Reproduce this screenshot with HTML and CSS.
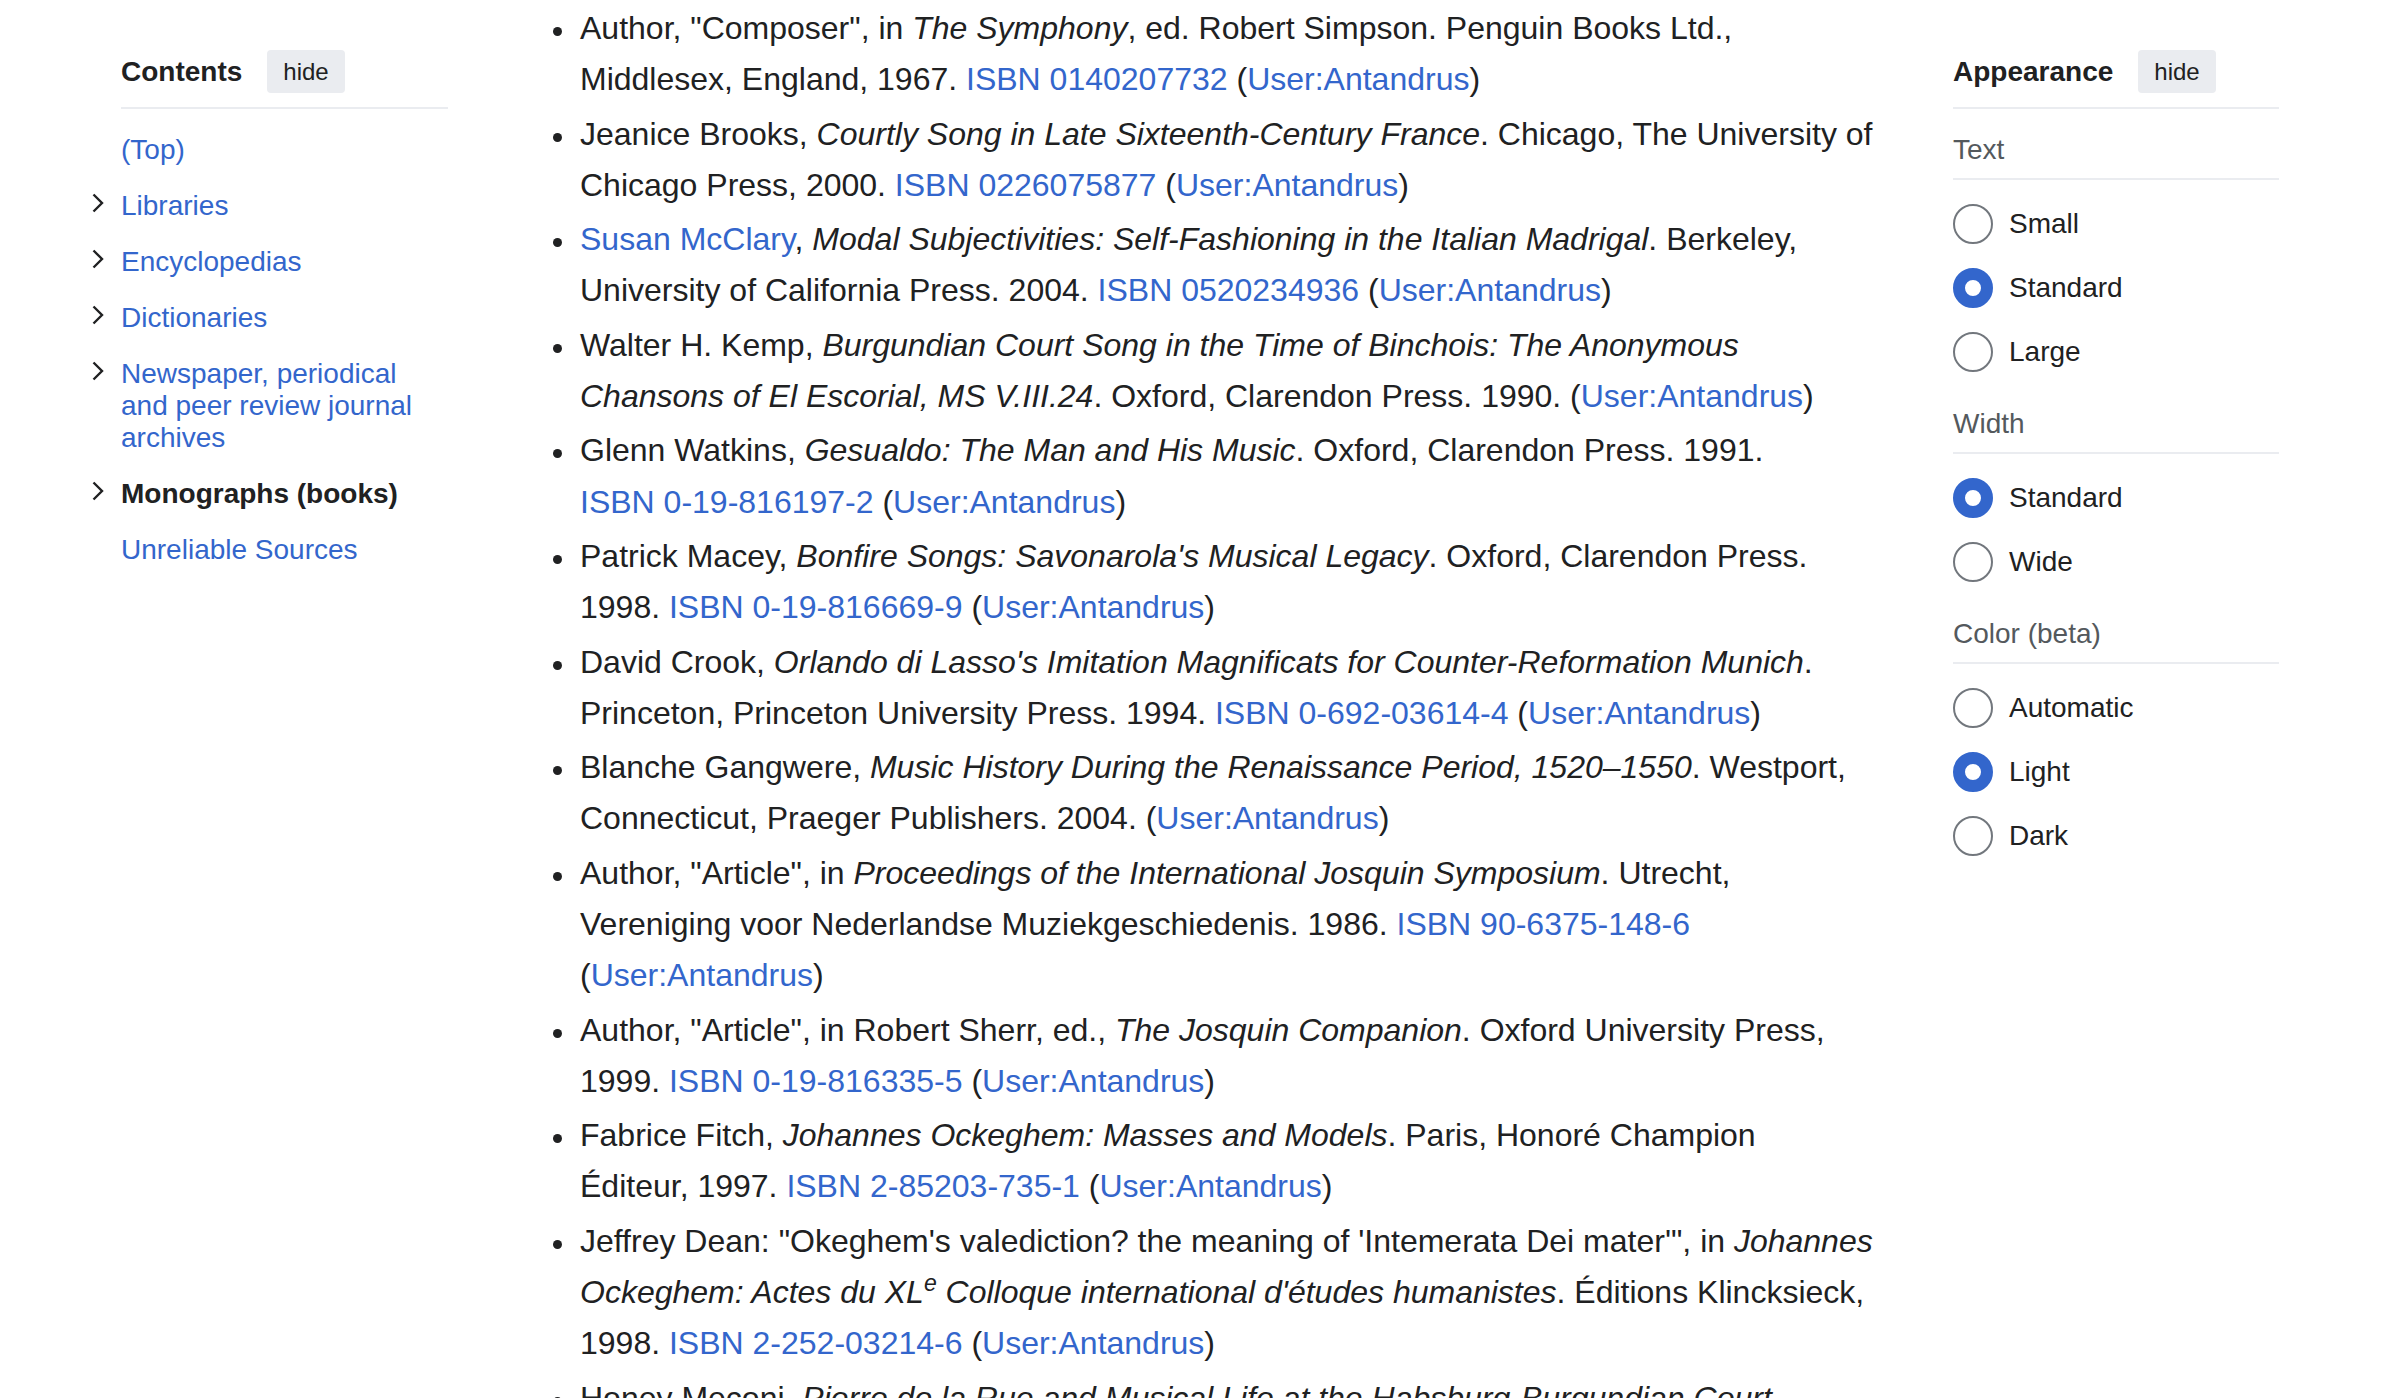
FILE: index.html
```html
<!DOCTYPE html>
<html lang="en">
<head>
<meta charset="utf-8">
<title>Monographs (books)</title>
<link rel="stylesheet" href="styles.css">
</head>
<body>
<div class="page">
  <nav class="toc">
    <div class="panel-head">
      <span class="panel-title">Contents</span>
      <button class="hide-btn" type="button">hide</button>
    </div>
    <ul class="toc-list">
      <li class="toc-item"><a class="toc-text" href="#">(Top)</a></li>
      <li class="toc-item"><span class="toc-toggle"><svg width="12" height="20" viewBox="0 0 12 20"><polyline points="1.5,1.5 10,10 1.5,18.5" fill="none" stroke="#202122" stroke-width="2.4"/></svg></span><a class="toc-text" href="#">Libraries</a></li>
      <li class="toc-item"><span class="toc-toggle"><svg width="12" height="20" viewBox="0 0 12 20"><polyline points="1.5,1.5 10,10 1.5,18.5" fill="none" stroke="#202122" stroke-width="2.4"/></svg></span><a class="toc-text" href="#">Encyclopedias</a></li>
      <li class="toc-item"><span class="toc-toggle"><svg width="12" height="20" viewBox="0 0 12 20"><polyline points="1.5,1.5 10,10 1.5,18.5" fill="none" stroke="#202122" stroke-width="2.4"/></svg></span><a class="toc-text" href="#">Dictionaries</a></li>
      <li class="toc-item"><span class="toc-toggle"><svg width="12" height="20" viewBox="0 0 12 20"><polyline points="1.5,1.5 10,10 1.5,18.5" fill="none" stroke="#202122" stroke-width="2.4"/></svg></span><a class="toc-text" href="#">Newspaper, periodical and peer review journal archives</a></li>
      <li class="toc-item"><span class="toc-toggle"><svg width="12" height="20" viewBox="0 0 12 20"><polyline points="1.5,1.5 10,10 1.5,18.5" fill="none" stroke="#202122" stroke-width="2.4"/></svg></span><a class="toc-text active" href="#">Monographs (books)</a></li>
      <li class="toc-item"><a class="toc-text" href="#">Unreliable Sources</a></li>
    </ul>
  </nav>

  <main class="content">
    <ul class="refs">
      <li>Author, "Composer", in <i>The Symphony</i>, ed. Robert Simpson. Penguin Books Ltd.,<br>Middlesex, England, 1967. <a href="#">ISBN&nbsp;0140207732</a> (<a href="#">User:Antandrus</a>)</li>
      <li>Jeanice Brooks, <i>Courtly Song in Late Sixteenth-Century France</i>. Chicago, The University of<br>Chicago Press, 2000. <a href="#">ISBN&nbsp;0226075877</a> (<a href="#">User:Antandrus</a>)</li>
      <li><a href="#">Susan McClary</a>, <i>Modal Subjectivities: Self-Fashioning in the Italian Madrigal</i>. Berkeley,<br>University of California Press. 2004. <a href="#">ISBN&nbsp;0520234936</a> (<a href="#">User:Antandrus</a>)</li>
      <li>Walter H. Kemp, <i>Burgundian Court Song in the Time of Binchois: The Anonymous<br>Chansons of El Escorial, MS V.III.24</i>. Oxford, Clarendon Press. 1990. (<a href="#">User:Antandrus</a>)</li>
      <li>Glenn Watkins, <i>Gesualdo: The Man and His Music</i>. Oxford, Clarendon Press. 1991.<br><a href="#">ISBN&nbsp;0-19-816197-2</a> (<a href="#">User:Antandrus</a>)</li>
      <li>Patrick Macey, <i>Bonfire Songs: Savonarola's Musical Legacy</i>. Oxford, Clarendon Press.<br>1998. <a href="#">ISBN&nbsp;0-19-816669-9</a> (<a href="#">User:Antandrus</a>)</li>
      <li>David Crook, <i>Orlando di Lasso's Imitation Magnificats for Counter-Reformation Munich</i>.<br>Princeton, Princeton University Press. 1994. <a href="#">ISBN&nbsp;0-692-03614-4</a> (<a href="#">User:Antandrus</a>)</li>
      <li>Blanche Gangwere, <i>Music History During the Renaissance Period, 1520–1550</i>. Westport,<br>Connecticut, Praeger Publishers. 2004. (<a href="#">User:Antandrus</a>)</li>
      <li>Author, "Article", in <i>Proceedings of the International Josquin Symposium</i>. Utrecht,<br>Vereniging voor Nederlandse Muziekgeschiedenis. 1986. <a href="#">ISBN&nbsp;90-6375-148-6</a><br>(<a href="#">User:Antandrus</a>)</li>
      <li>Author, "Article", in Robert Sherr, ed., <i>The Josquin Companion</i>. Oxford University Press,<br>1999. <a href="#">ISBN&nbsp;0-19-816335-5</a> (<a href="#">User:Antandrus</a>)</li>
      <li>Fabrice Fitch, <i>Johannes Ockeghem: Masses and Models</i>. Paris, Honoré Champion<br>Éditeur, 1997. <a href="#">ISBN&nbsp;2-85203-735-1</a> (<a href="#">User:Antandrus</a>)</li>
      <li>Jeffrey Dean: "Okeghem's valediction? the meaning of 'Intemerata Dei mater'", in <i>Johannes<br>Ockeghem: Actes du XL<sup>e</sup> Colloque international d'études humanistes</i>. Éditions Klincksieck,<br>1998. <a href="#">ISBN&nbsp;2-252-03214-6</a> (<a href="#">User:Antandrus</a>)</li>
      <li>Honey Meconi, <i>Pierre de la Rue and Musical Life at the Habsburg-Burgundian Court</i>.<br>Oxford University Press. 2003. (<a href="#">User:Antandrus</a>)</li>
    </ul>
  </main>

  <aside class="appearance">
    <div class="panel-head">
      <span class="panel-title">Appearance</span>
      <button class="hide-btn" type="button">hide</button>
    </div>
    <section class="group">
      <div class="group-label">Text</div>
      <ul class="options">
        <li><label class="option"><input class="radio" type="radio" name="text"> Small</label></li>
        <li><label class="option"><input class="radio" type="radio" name="text" checked> Standard</label></li>
        <li><label class="option"><input class="radio" type="radio" name="text"> Large</label></li>
      </ul>
    </section>
    <section class="group">
      <div class="group-label">Width</div>
      <ul class="options">
        <li><label class="option"><input class="radio" type="radio" name="width" checked> Standard</label></li>
        <li><label class="option"><input class="radio" type="radio" name="width"> Wide</label></li>
      </ul>
    </section>
    <section class="group">
      <div class="group-label">Color (beta)</div>
      <ul class="options">
        <li><label class="option"><input class="radio" type="radio" name="color"> Automatic</label></li>
        <li><label class="option"><input class="radio" type="radio" name="color" checked> Light</label></li>
        <li><label class="option"><input class="radio" type="radio" name="color"> Dark</label></li>
      </ul>
    </section>
  </aside>
</div>
</body>
</html>
```

FILE: styles.css
```css
html, body {
  margin: 0;
  padding: 0;
  overflow: hidden;
  background: #ffffff;
}

body {
  font-family: "Liberation Sans", Arial, Helvetica, sans-serif;
  color: #202122;
}

a {
  color: #3366cc;
  text-decoration: none;
}

.page {
  display: flex;
  align-items: flex-start;
}

/* Shared panel header */
.panel-head {
  display: flex;
  align-items: center;
  gap: 25px;
  padding-bottom: 14px;
  border-bottom: 2px solid #eaecf0;
}

.panel-title {
  font-size: 28px;
  line-height: 32px;
  font-weight: bold;
  color: #202122;
}

.hide-btn {
  font-family: inherit;
  font-size: 24px;
  height: 43px;
  line-height: 43px;
  padding: 0 16px;
  border: 0;
  border-radius: 4px;
  background: #eaecf0;
  color: #202122;
}

/* Table of contents */
.toc {
  flex: none;
  width: 327px;
  margin-left: 121px;
  padding-top: 50px;
}

.toc-list {
  list-style: none;
  margin: 13px 0 0;
  padding: 0;
}

.toc-item {
  display: flex;
  padding: 12px 0;
  font-size: 28px;
  line-height: 32px;
}

.toc-toggle {
  flex: none;
  width: 29px;
  margin-left: -32px;
  padding-left: 3px;
}

.toc-toggle svg {
  display: block;
  margin-top: 3px;
}

.toc-text {
  display: block;
  width: 305px;
  color: #3366cc;
}

.toc-text.active {
  color: #202122;
  font-weight: bold;
}

/* Main content */
.content {
  flex: none;
  width: 1330px;
  margin-left: 132px;
  padding-top: 3px;
}

.refs {
  list-style: none;
  margin: 0;
  padding: 0;
  font-size: 32px;
  line-height: 51.2px;
  color: #202122;
}

.refs li {
  position: relative;
  margin-bottom: 3.2px;
}

.refs li::before {
  content: "";
  position: absolute;
  left: -27px;
  top: 24px;
  width: 9px;
  height: 9px;
  border-radius: 50%;
  background: #202122;
}

.refs sup {
  font-size: 0.72em;
  line-height: 1;
  vertical-align: super;
}

/* Appearance panel */
.appearance {
  flex: none;
  width: 326px;
  margin-left: 43px;
  padding-top: 50px;
}

.group-label {
  font-size: 28px;
  line-height: 32px;
  color: #54595d;
  padding: 24px 0 12px;
  border-bottom: 2px solid #eaecf0;
}

.group:first-of-type .group-label {
  padding-top: 25px;
}

.options {
  list-style: none;
  margin: 12px 0 0;
  padding: 0;
}

.option {
  display: flex;
  align-items: center;
  gap: 16px;
  height: 64px;
  font-size: 28px;
  color: #202122;
}

.radio {
  appearance: none;
  -webkit-appearance: none;
  flex: none;
  box-sizing: border-box;
  width: 40px;
  height: 40px;
  margin: 0;
  border: 2px solid #72777d;
  border-radius: 50%;
  background: #ffffff;
}

.radio:checked {
  border: 12px solid #3366cc;
}
```
